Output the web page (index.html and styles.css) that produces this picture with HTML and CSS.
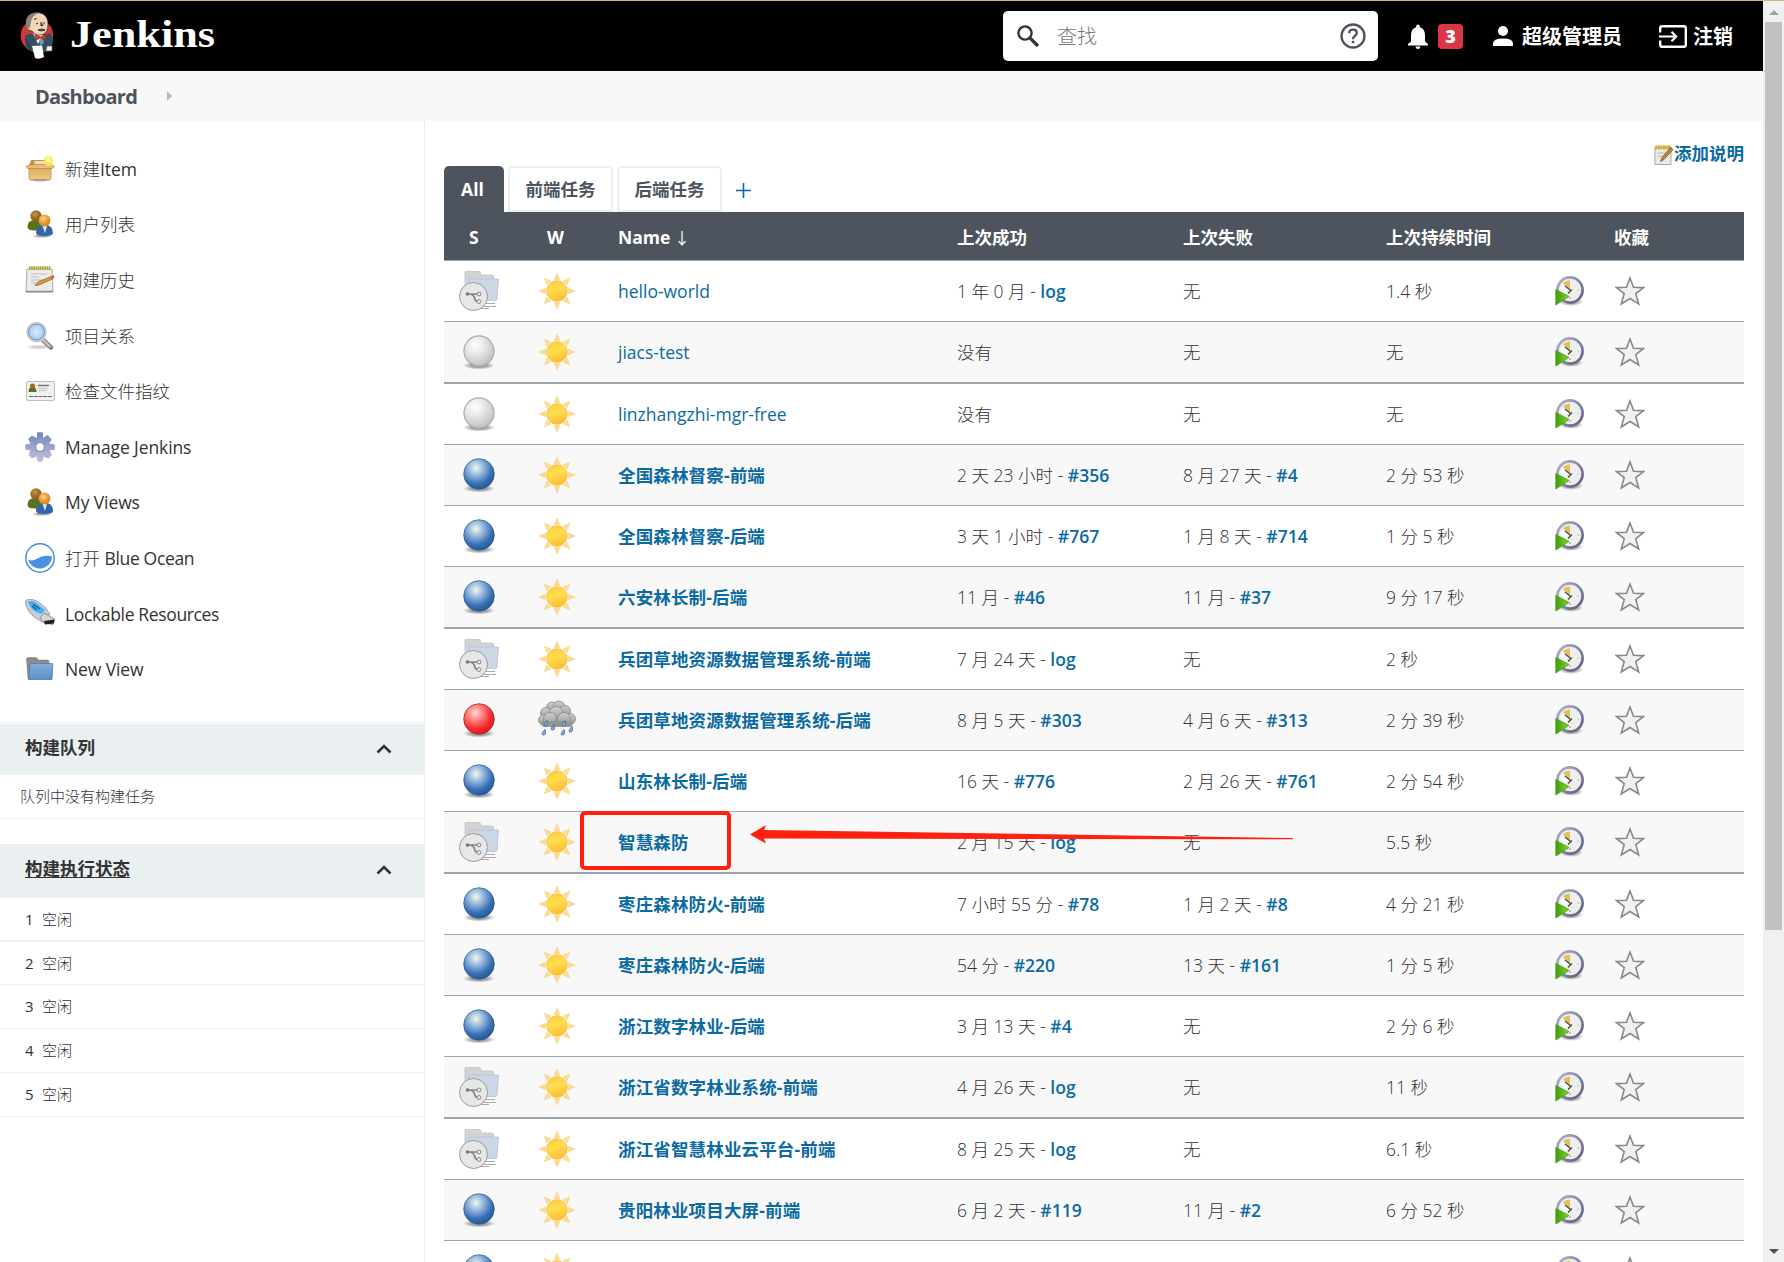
FILE: index.html
```html
<!DOCTYPE html>
<html lang="zh-CN">
<head>
<meta charset="utf-8">
<title>Dashboard [Jenkins]</title>
<link rel="stylesheet" href="styles.css">
</head>
<body>
<svg class="defs" width="0" height="0" aria-hidden="true">
  <defs>
    <radialGradient id="gBlue" cx=".4" cy=".3" r=".7"><stop offset="0" stop-color="#f4f8e4"/><stop offset=".3" stop-color="#a3c1e2"/><stop offset=".75" stop-color="#366fb4"/><stop offset="1" stop-color="#28599a"/></radialGradient>
    <radialGradient id="gRed" cx=".38" cy=".3" r=".7"><stop offset="0" stop-color="#ffd6d2"/><stop offset=".4" stop-color="#ff7a75"/><stop offset=".75" stop-color="#f62a2c"/><stop offset="1" stop-color="#df1d1f"/></radialGradient>
    <radialGradient id="gGrey" cx=".38" cy=".3" r=".75"><stop offset="0" stop-color="#fff"/><stop offset=".4" stop-color="#e8e8e8"/><stop offset="1" stop-color="#bcbcbc"/></radialGradient>
    <radialGradient id="gShade"><stop offset=".5" stop-color="#000" stop-opacity=".35"/><stop offset="1" stop-color="#000" stop-opacity="0"/></radialGradient>
    <linearGradient id="gSun" x1="0" y1="0" x2=".3" y2="1"><stop offset="0" stop-color="#fbc83f"/><stop offset=".5" stop-color="#ffdf4e"/><stop offset="1" stop-color="#fcbf37"/></linearGradient>
    <linearGradient id="gCloud" x1="0" y1="0" x2="0" y2="1"><stop offset="0" stop-color="#cfd1ce"/><stop offset="1" stop-color="#949693"/></linearGradient>
    <linearGradient id="gBox" x1="0" y1="0" x2="0" y2="1"><stop offset="0" stop-color="#d9a557"/><stop offset="1" stop-color="#f0c988"/></linearGradient>
    <linearGradient id="gGear" x1="0" y1="0" x2="0" y2="1"><stop offset="0" stop-color="#7288b4"/><stop offset="1" stop-color="#c6bfdd"/></linearGradient>
    <linearGradient id="gFold" x1="0" y1="0" x2="0" y2="1"><stop offset="0" stop-color="#85add9"/><stop offset="1" stop-color="#5c8fc9"/></linearGradient>
    <linearGradient id="gRing" x1="0" y1="0" x2="1" y2="1"><stop offset="0" stop-color="#b3b3ce"/><stop offset="1" stop-color="#5c5780"/></linearGradient>
    <radialGradient id="gLens"><stop offset="0" stop-color="#dcecfb"/><stop offset="1" stop-color="#9fc4ec"/></radialGradient>
    <linearGradient id="gPlay" x1="0" y1="0" x2="1" y2="0"><stop offset="0" stop-color="#3f9a10"/><stop offset="1" stop-color="#7edb25"/></linearGradient>
    <radialGradient id="gOr" cx=".4" cy=".35"><stop offset="0" stop-color="#fbd08a"/><stop offset="1" stop-color="#e38d1c"/></radialGradient>
    <radialGradient id="gBr" cx=".4" cy=".35"><stop offset="0" stop-color="#c4924c"/><stop offset="1" stop-color="#94601a"/></radialGradient>
  </defs>
  <symbol id="blue" viewBox="0 0 40 40"><ellipse cx="20" cy="33.5" rx="16" ry="4" fill="url(#gShade)"/><circle cx="20" cy="19" r="15.3" fill="url(#gBlue)" stroke="#2c5690" stroke-width=".7"/></symbol>
  <symbol id="red" viewBox="0 0 40 40"><ellipse cx="20" cy="33.5" rx="16" ry="4" fill="url(#gShade)"/><circle cx="20" cy="19" r="15.3" fill="url(#gRed)" stroke="#992020" stroke-width=".7"/></symbol>
  <symbol id="grey" viewBox="0 0 40 40"><ellipse cx="20" cy="33.5" rx="16" ry="4" fill="url(#gShade)"/><circle cx="20" cy="19" r="15.1" fill="url(#gGrey)" stroke="#a9a9a9" stroke-width="1.1"/></symbol>
  <symbol id="branch" viewBox="0 0 40 40"><path d="M6 1Q6 0 7 0H20Q21 0 21.5 2L22 4H33Q34.5 4 34.5 6V26H6z" fill="#d3d3d3" stroke="#bdbdbd" stroke-width=".7"/><path d="M10 9Q10 8 11 8H39.5L38 28Q38 29.500 36 29.500H12z" fill="#ccd7e6" stroke="#b0c1d8" stroke-width=".8"/><path d="M26 32.500H36M24 35.500H37M22 37.500H30" stroke="#aaa" stroke-width="1.100"/><circle cx="14.500" cy="25.500" r="14" fill="#e7e7e7" stroke="#9a9a9a"/><path d="M8 23H19M11 23Q15 24 15.500 27Q16 30 18.500 30.500" fill="none" stroke="#858585" stroke-width="1.700"/><circle cx="8.500" cy="23" r="1.800" fill="#777"/><circle cx="20" cy="23" r="1.900" fill="#eee" stroke="#888"/><circle cx="20" cy="30.500" r="1.900" fill="#eee" stroke="#888"/></symbol>
  <symbol id="sun" viewBox="-20 -20 40 40"><g fill="#fbdc91" stroke="#f6cd79" stroke-width=".5"><path id="ray" d="M-2.800-11.500L0-18L2.800-11.500z"/><use href="#ray" transform="rotate(45)"/><use href="#ray" transform="rotate(90)"/><use href="#ray" transform="rotate(135)"/><use href="#ray" transform="rotate(180)"/><use href="#ray" transform="rotate(225)"/><use href="#ray" transform="rotate(270)"/><use href="#ray" transform="rotate(315)"/></g><circle r="10.300" fill="url(#gSun)" stroke="#f8c548"/></symbol>
  <symbol id="rain" viewBox="0 0 40 40"><g fill="url(#gCloud)" stroke="#868886" stroke-width=".8"><circle cx="15" cy="7.500" r="5.500"/><circle cx="22" cy="7" r="6"/><circle cx="28" cy="11" r="5.500"/><circle cx="9" cy="13" r="5.500"/><circle cx="33" cy="19" r="5.500"/><circle cx="6.500" cy="20" r="5"/><circle cx="19" cy="14" r="7.500"/><circle cx="27" cy="19" r="6.500"/><circle cx="13" cy="19" r="6.500"/></g><path d="M5 21H35Q37 27 32 27H7Q3 26 5 21z" fill="#949693"/><g fill="#8fb1dd" stroke="#3969a8" stroke-width=".9"><path id="drop" d="M10 20.500Q5.500 25.500 8 26Q11.500 26.500 10 20.500z"/><use href="#drop" x="7" y="4"/><use href="#drop" x="18" y="0"/><use href="#drop" x="-2" y="9"/><use href="#drop" x="25" y="6"/><use href="#drop" x="17" y="9"/></g></symbol>
  <symbol id="build" viewBox="0 0 30 30"><ellipse cx="16" cy="25.500" rx="12" ry="4.500" fill="url(#gShade)"/><circle cx="15" cy="14" r="12.600" fill="#eeeeec" stroke="url(#gRing)" stroke-width="2.700"/><path d="M15 14V4.500A10 10 0 0 0 8 7z" fill="#e2c05a"/><path d="M10 10L15.500 14.500M13 17.500L17 13.500" stroke="#444" stroke-width="1.200"/><path d="M5.500 12L7.500 9L13 13.500L10.500 17z" fill="#fff"/><circle cx="23.500" cy="14" r=".8" fill="#bbb"/><circle cx="15" cy="22" r=".8" fill="#888"/><path d="M.8 13.500V29L14 20.500z" fill="url(#gPlay)" stroke="#4d9e22" stroke-width=".8"/></symbol>
  <symbol id="star" viewBox="0 0 30 30"><path d="M15 2L18.500 11.200L28.500 11.600L20.800 17.600L23.700 28L15 22.500L6.300 28L9.200 17.600L1.500 11.600L11.500 11.200z" fill="#f1f1f0" stroke="#888a85" stroke-width="1.600"/></symbol>
  <symbol id="people" viewBox="0 0 30 30"><ellipse cx="17" cy="27" rx="10" ry="2" fill="url(#gShade)"/><path d="M2.500 18Q2.500 11 10 11Q17 11 16 21Q3 23 2.500 18z" fill="#587318"/><circle cx="11" cy="7" r="5.700" fill="url(#gBr)"/><path d="M11 24Q11 15.500 19.500 15.500Q28 16 28 24Q28 27 19.500 27Q11 27 11 24z" fill="#3465a8"/><path d="M17.500 17H22L20 24z" fill="#dfe9f5"/><circle cx="19.500" cy="11.500" r="5.900" fill="url(#gOr)"/></symbol>
  <symbol id="pencil" viewBox="0 0 30 30"><path d="M2 4H27L28 27H1z" fill="#ececea" stroke="#a9a9a7"/><path d="M1 26.500H28" stroke="#8e8e8c" stroke-width="1.500"/><path d="M4 3H26" stroke="#a9a437" stroke-width="3.500" stroke-dasharray="1.600 .6"/><path d="M6 9H22M6 12H14M6 15H19M6 18H12" stroke="#bdbdbb" stroke-width="1"/><path d="M10 20.500L13 17L26 11.500L27.500 14L14 20z" fill="#d99b3d" stroke="#8d5d17" stroke-width=".7"/><path d="M26 11L29 10.500L29.300 12.800L27.500 14z" fill="#e25555"/></symbol>
  <symbol id="up" viewBox="0 0 16 10"><path d="M1.500 8.500L8 2L14.500 8.500" fill="none" stroke="#333" stroke-width="2.600"/></symbol>
</svg>

<div class="window">
<div class="page">
<header class="top">
  <a class="brand">
    <svg width="34" height="48" viewBox="0 0 34 48"><circle cx="17" cy="23.500" r="16.300" fill="#d33833"/><path d="M5 24Q9 21 13 22L24 23L30 21L33 26L32 38L25 40H12L6 36z" fill="#335061"/><path d="M13 21L18 32L23 23z" fill="#f5f5f5"/><path d="M6 14Q5 4 12 1.500Q18-.5 23 2Q28 5 28 12Q28 20 23 22.500Q16 24.500 12 19L8 18z" fill="#f0d6b7" stroke="#333" stroke-width=".7"/><path d="M6 15Q5 5 11 2Q15 0 19 1Q12 3 11 10L10 15L8 18Q6 17 6 15z" fill="#8a8279"/><path d="M14 7.500L17 6.500M21 10V14L23.500 13M16 12L18 11M23 11H25M18 18Q21 20 25 18L22 17z" fill="#6d6b6d" stroke="#333" stroke-width="1"/><path d="M15 22.500L21 25L26 22.500V28L21 26L16 28z" fill="#d33833" stroke="#81201c" stroke-width=".6"/><path d="M19 29L22 26L24 30L21 34z" fill="#6d9ac0"/><path d="M5 27Q9 31 11 39" stroke="#1a2b36" fill="none"/><path d="M12 34L22 33.500L24 45Q19 48 15 46z" fill="#fff"/><path d="M27 34H32V39H26z" fill="#f4f4f4" stroke="#555" stroke-width=".6"/></svg>
    <svg class="wordmark" width="150" height="60" viewBox="0 0 150 60"><text x="0" y="40.500" textLength="145" lengthAdjust="spacingAndGlyphs">Jenkins</text></svg>
  </a>
  <div class="search">
    <svg width="24" height="24" viewBox="0 0 24 24"><circle cx="9" cy="9" r="6.600" fill="none" stroke="#333" stroke-width="2.400"/><path d="M14 14L22 22" stroke="#333" stroke-width="3.200"/></svg>
    <span>查找</span>
    <svg width="26" height="26" viewBox="0 0 26 26"><circle cx="13" cy="13" r="11.500" fill="none" stroke="#4d545d" stroke-width="2.300"/><path d="M9.200 10.300Q9.200 6.700 13 6.700Q16.800 6.700 16.800 10Q16.800 11.700 14.900 13Q13 14.300 13 16.200" fill="none" stroke="#4d545d" stroke-width="2.300"/><path d="M11.800 17.800H14.200V20.200H11.800z" fill="#4d545d"/></svg>
  </div>
  <a class="bell"><svg width="20" height="25" viewBox="0 0 20 25"><path d="M10 .5Q11.800.5 11.800 2.200V3.300Q17 5 17 11V17.500L20 20V21.500H0V20L3 17.500V11Q3 5 8.200 3.300V2.200Q8.200.5 10 .5zM7.500 22.500H12.500Q12 25 10 25Q8 25 7.500 22.500z" fill="#fff"/></svg><b class="badge">3</b></a>
  <a class="user"><svg width="20" height="20" viewBox="0 0 20 20"><circle cx="10" cy="5" r="5" fill="#fff"/><path d="M0 20V17.500Q0 12.500 10 12.500Q20 12.500 20 17.500V20z" fill="#fff"/></svg><span>超级管理员</span></a>
  <a class="logout"><svg width="28" height="23" viewBox="0 0 28 23"><path d="M1.200 7.500V3.200Q1.200 1.200 3.200 1.200H24.800Q26.800 1.200 26.800 3.200V19.800Q26.800 21.800 24.800 21.800H3.200Q1.200 21.800 1.200 19.800V15.500" fill="none" stroke="#fff" stroke-width="2.400"/><path d="M0 11.500H17M12.500 6.800L17.200 11.500L12.500 16.200" fill="none" stroke="#fff" stroke-width="2.200"/></svg><span>注销</span></a>
</header>
<nav class="crumbs"><a>Dashboard</a><i></i></nav>

<div class="body">
<aside class="side">
  <ul class="tasks">
    <li><svg width="30" height="30" viewBox="0 0 30 30"><ellipse cx="15" cy="26" rx="12" ry="2" fill="url(#gShade)"/><path d="M6 6L24 6L27 12H4z" fill="#c4924a"/><path d="M9 7H21L20 11H10z" fill="#e6dcc8"/><path d="M4 11H26V24Q26 25.500 24.500 25.500H5.500Q4 25.500 4 24z" fill="url(#gBox)" stroke="#c38a3c" stroke-width=".7"/><path d="M4 11L.8 12.500L3 14.500H27L29.500 12.500L26 10.500z" fill="#e9be7d" stroke="#c38a3c" stroke-width=".7"/><circle cx="23.500" cy="7" r="4.800" fill="#fdf04b" opacity=".9"/><circle cx="23.500" cy="6.500" r="2" fill="#fffbb0"/></svg><span>新建<b class="lat">Item</b></span></li>
    <li><svg width="30" height="30"><use href="#people"/></svg><span>用户列表</span></li>
    <li><svg width="30" height="30"><use href="#pencil"/></svg><span>构建历史</span></li>
    <li><svg width="30" height="30" viewBox="0 0 30 30"><ellipse cx="14" cy="26" rx="13" ry="2.500" fill="url(#gShade)" opacity=".5"/><path d="M17 18L26 26.500" stroke="#858585" stroke-width="4.500" stroke-linecap="round"/><path d="M17 18L25 25.500" stroke="#c9c9c9" stroke-width="2" stroke-linecap="round"/><circle cx="11.500" cy="11" r="9.200" fill="url(#gLens)" stroke="#c5c9cc" stroke-width="2.200"/><circle cx="11.500" cy="11" r="7.800" fill="none" stroke="#6f9bd0" stroke-width="1"/></svg><span>项目关系</span></li>
    <li><svg width="30" height="30" viewBox="0 0 30 30"><rect x="1.500" y="5.500" width="28" height="19" rx="1.500" fill="#f0f0ee" stroke="#bdbdbb"/><path d="M3.500 16Q3.500 11 7.500 11Q11.500 11 11.500 16z" fill="#587318"/><circle cx="7.500" cy="10" r="2.600" fill="#a56a25"/><path d="M13 9.500H24" stroke="#777" stroke-width="1.500"/><path d="M14 12.500H23M14 14.500H22" stroke="#c5c5c3"/><path d="M4 20.500H27" stroke="#666" stroke-width="1.200" stroke-dasharray="4 .7"/></svg><span>检查文件指纹</span></li>
    <li><svg width="30" height="30" viewBox="-15 -15 30 30"><g fill="url(#gGear)"><path d="M-2.800-14.800H2.800L3.200-9L7.500-12L11.800-7.500L9-3.500L14.800-2.500V2.800L9.500 3.500L12 8L8.200 11.800L3.500 9.500L2.500 14.800H-2.500L-3.500 9.500L-8 11.500L-11.500 8L-9.500 3.500L-14.800 2.500V-2.500L-9.500-3.500L-12-8L-8-11.500L-3.200-9z"/></g><circle r="4.400" fill="#fff" stroke="#7a80a8"/></svg><b class="lat">Manage Jenkins</b></li>
    <li><svg width="30" height="30"><use href="#people"/></svg><b class="lat">My Views</b></li>
    <li><svg width="30" height="30" viewBox="0 0 30 30"><circle cx="15" cy="15" r="14.200" fill="#fff" stroke="#4a90e2" stroke-width="1.500"/><path d="M3 16.500Q7 18.500 11.500 16Q19 11 27 13.500A12.200 12.200 0 0 1 3 16.500z" fill="#4a90e2"/></svg><span>打开 <b class="lat tight">Blue Ocean</b></span></li>
    <li><svg width="30" height="30" viewBox="0 0 30 30"><path d="M.5 2Q2 0 6 0Q12 1 20 8L25 15L18 23Q6 18 2 9Q0 5 .5 2z" fill="#c9cbd9" stroke="#8e90a5" stroke-width=".8"/><path d="M3 3Q6 1 10 3L20 11L16 15Q6 12 3 3z" fill="#3fb4ee"/><path d="M8 5L15 10M7 7L12 11" stroke="#1b5f94" stroke-width="1.400"/><path d="M19 14L29.500 20L28 25.500L19 24L15 19z" fill="#d4d4d4" stroke="#777" stroke-width=".7"/><path d="M19 22L29.500 20.500L29 24.500L20 25.500z" fill="#222"/></svg><b class="lat tight">Lockable Resources</b></li>
    <li><svg width="30" height="30" viewBox="0 0 30 30"><path d="M1.500 5Q1.500 3.500 3 3.500H11Q12.500 3.500 13 6H23Q24 6 24 8V25H3z" fill="#8b8b89" stroke="#777" stroke-width=".5"/><path d="M5 10.500Q5 9.500 6 9.500H27Q28 9.500 27.800 10.500L27 25.500H3.500z" fill="url(#gFold)" stroke="#4c7cb5" stroke-width=".8"/></svg><b class="lat">New View</b></li>
  </ul>
  <section class="pane queue">
    <h2><span>构建队列</span><svg width="16" height="10"><use href="#up"/></svg></h2>
    <p>队列中没有构建任务</p>
  </section>
  <section class="pane execs">
    <h2><span>构建执行状态</span><svg width="16" height="10"><use href="#up"/></svg></h2>
    <ol><li><b>1</b>空闲</li><li><b>2</b>空闲</li><li><b>3</b>空闲</li><li><b>4</b>空闲</li><li><b>5</b>空闲</li></ol>
  </section>
</aside>

<main class="main">
  <div class="describe"><svg width="20" height="20" viewBox="0 0 20 20"><path d="M1 2H17V19.500H.8z" fill="#e9e9e7" stroke="#aaa9a5"/><path d="M1.500 2.500H17" stroke="#d2ae28" stroke-width="4" stroke-dasharray="2 .5"/><path d="M3.500 8H12M3.500 11H9" stroke="#bbb"/><path d="M6.500 16.500L8 12.500L16.500 2.500L19 4.500L10 14.500z" fill="#bb8a35" stroke="#69490f" stroke-width=".7"/></svg><a>添加说明</a></div>
  <div class="tabs"><a class="on">All</a><a>前端任务</a><a>后端任务</a><svg width="15" height="15" viewBox="0 0 15 15"><path d="M7.500 0V15M0 7.500H15" stroke="#0b6aa2" stroke-width="1.600"/></svg></div>
  <div class="jobs">
    <div class="head"><b>S</b><b>W</b><b>Name <em>↓</em></b><b>上次成功</b><b>上次失败</b><b>上次持续时间</b><b></b><b>收藏</b></div>
    <div class="row"><svg><use href="#branch"/></svg><svg><use href="#sun"/></svg><a class="lat">hello-world</a><span>1 年 0 月 - <a>log</a></span><span>无</span><span>1.4 秒</span><svg><use href="#build"/></svg><svg><use href="#star"/></svg></div>
    <div class="row"><svg><use href="#grey"/></svg><svg><use href="#sun"/></svg><a class="lat">jiacs-test</a><span>没有</span><span>无</span><span>无</span><svg><use href="#build"/></svg><svg><use href="#star"/></svg></div>
    <div class="row"><svg><use href="#grey"/></svg><svg><use href="#sun"/></svg><a class="lat">linzhangzhi-mgr-free</a><span>没有</span><span>无</span><span>无</span><svg><use href="#build"/></svg><svg><use href="#star"/></svg></div>
    <div class="row"><svg><use href="#blue"/></svg><svg><use href="#sun"/></svg><a class="cn">全国森林督察-前端</a><span>2 天 23 小时 - <a>#356</a></span><span>8 月 27 天 - <a>#4</a></span><span>2 分 53 秒</span><svg><use href="#build"/></svg><svg><use href="#star"/></svg></div>
    <div class="row"><svg><use href="#blue"/></svg><svg><use href="#sun"/></svg><a class="cn">全国森林督察-后端</a><span>3 天 1 小时 - <a>#767</a></span><span>1 月 8 天 - <a>#714</a></span><span>1 分 5 秒</span><svg><use href="#build"/></svg><svg><use href="#star"/></svg></div>
    <div class="row"><svg><use href="#blue"/></svg><svg><use href="#sun"/></svg><a class="cn">六安林长制-后端</a><span>11 月 - <a>#46</a></span><span>11 月 - <a>#37</a></span><span>9 分 17 秒</span><svg><use href="#build"/></svg><svg><use href="#star"/></svg></div>
    <div class="row"><svg><use href="#branch"/></svg><svg><use href="#sun"/></svg><a class="cn">兵团草地资源数据管理系统-前端</a><span>7 月 24 天 - <a>log</a></span><span>无</span><span>2 秒</span><svg><use href="#build"/></svg><svg><use href="#star"/></svg></div>
    <div class="row"><svg><use href="#red"/></svg><svg><use href="#rain"/></svg><a class="cn">兵团草地资源数据管理系统-后端</a><span>8 月 5 天 - <a>#303</a></span><span>4 月 6 天 - <a>#313</a></span><span>2 分 39 秒</span><svg><use href="#build"/></svg><svg><use href="#star"/></svg></div>
    <div class="row"><svg><use href="#blue"/></svg><svg><use href="#sun"/></svg><a class="cn">山东林长制-后端</a><span>16 天 - <a>#776</a></span><span>2 月 26 天 - <a>#761</a></span><span>2 分 54 秒</span><svg><use href="#build"/></svg><svg><use href="#star"/></svg></div>
    <div class="row"><svg><use href="#branch"/></svg><svg><use href="#sun"/></svg><a class="cn">智慧森防</a><span>2 月 15 天 - <a>log</a></span><span>无</span><span>5.5 秒</span><svg><use href="#build"/></svg><svg><use href="#star"/></svg>
      <i class="mark"></i>
      <svg class="arrow" width="544" height="20" viewBox="0 0 544 20"><path d="M0 9.500L16 0L14 5L543 13V14.300L14 13.500L16 18.500z" fill="#ff2010"/></svg></div>
    <div class="row"><svg><use href="#blue"/></svg><svg><use href="#sun"/></svg><a class="cn">枣庄森林防火-前端</a><span>7 小时 55 分 - <a>#78</a></span><span>1 月 2 天 - <a>#8</a></span><span>4 分 21 秒</span><svg><use href="#build"/></svg><svg><use href="#star"/></svg></div>
    <div class="row"><svg><use href="#blue"/></svg><svg><use href="#sun"/></svg><a class="cn">枣庄森林防火-后端</a><span>54 分 - <a>#220</a></span><span>13 天 - <a>#161</a></span><span>1 分 5 秒</span><svg><use href="#build"/></svg><svg><use href="#star"/></svg></div>
    <div class="row"><svg><use href="#blue"/></svg><svg><use href="#sun"/></svg><a class="cn">浙江数字林业-后端</a><span>3 月 13 天 - <a>#4</a></span><span>无</span><span>2 分 6 秒</span><svg><use href="#build"/></svg><svg><use href="#star"/></svg></div>
    <div class="row"><svg><use href="#branch"/></svg><svg><use href="#sun"/></svg><a class="cn">浙江省数字林业系统-前端</a><span>4 月 26 天 - <a>log</a></span><span>无</span><span>11 秒</span><svg><use href="#build"/></svg><svg><use href="#star"/></svg></div>
    <div class="row"><svg><use href="#branch"/></svg><svg><use href="#sun"/></svg><a class="cn">浙江省智慧林业云平台-前端</a><span>8 月 25 天 - <a>log</a></span><span>无</span><span>6.1 秒</span><svg><use href="#build"/></svg><svg><use href="#star"/></svg></div>
    <div class="row"><svg><use href="#blue"/></svg><svg><use href="#sun"/></svg><a class="cn">贵阳林业项目大屏-前端</a><span>6 月 2 天 - <a>#119</a></span><span>11 月 - <a>#2</a></span><span>6 分 52 秒</span><svg><use href="#build"/></svg><svg><use href="#star"/></svg></div>
    <div class="row"><svg><use href="#blue"/></svg><svg><use href="#sun"/></svg><a></a><span></span><span></span><span></span><svg><use href="#build"/></svg><svg><use href="#star"/></svg></div>
  </div>
</main>
</div>
</div>
<div class="scroll"><i class="su"></i><i class="thumb"></i><i class="sd"></i></div>
</div>
</body>
</html>
```
FILE: styles.css
```css
* { box-sizing: border-box; }
body {
  margin: 0;
  overflow: hidden;
  font: 17.5px/24px "Open Sans", "Noto Sans CJK SC", sans-serif;
  color: #333;
  background: #fff;
}
h2, p, ul, ol { margin: 0; padding: 0; list-style: none; }
svg { display: block; flex: none; }
.defs { position: absolute; }
.window { display: flex; height: 1262px; overflow: hidden; border-top: 1px solid #d2b48c; }
.page { flex: 1; min-width: 0; }

.top { display: flex; align-items: center; height: 70px; padding: 0 30px 0 20px; background: #000; color: #fff; font-size: 20px; font-weight: 700; }
.top span { padding-top: 2px; }
.brand { display: flex; align-items: center; gap: 16px; margin-right: auto; }
.wordmark text { font: 700 37px "Liberation Serif", serif; fill: #fff; }
.search { display: flex; align-items: center; width: 375px; height: 50px; padding: 0 12px 0 13px; border-radius: 5px; background: #fff; color: #777; font-weight: 400; }
.search span { flex: 1; margin-left: 17px; font-weight: 300; }
.bell { display: flex; align-items: center; gap: 10px; margin-left: 30px; }
.badge { width: 25px; height: 25px; border-radius: 4px; background: #dc3545; font-size: 18px; line-height: 25px; text-align: center; }
.user { display: flex; align-items: center; gap: 9px; margin-left: 30px; }
.logout { display: flex; align-items: center; gap: 6px; margin-left: 37px; }

.crumbs { display: flex; align-items: center; height: 50px; padding-left: 35px; background: #f8f8f8; color: #4d545d; font-size: 20px; font-weight: 700; }
.crumbs a { width: 132px; letter-spacing: -.75px; padding-top: 2px; }
.crumbs i { border: 5px solid transparent; border-left-color: #b5b5b5; border-right: 0; margin-top: -1px; }

.body { display: flex; height: 1141px; }
.side { width: 425px; border-right: 1px solid #eaeff2; }
.tasks { padding: 20px 0 25px; }
.tasks li { display: flex; align-items: center; gap: 10px; height: 55.600px; padding-left: 25px; }
.tasks span { font-weight: 300; }
.tasks .lat { font-weight: 500; letter-spacing: -.1px; }
.tasks .tight { letter-spacing: -.35px; }
.pane h2 { display: flex; align-items: center; justify-content: space-between; padding: 0 32px 4px 25px; background: #eaeff2; font-size: 17.500px; font-weight: 700; }
.pane h2 svg { margin-top: 3px; }
.pane { font-size: 15px; }
.queue { border-top: 1px solid #eaeff2; }
.queue h2 { height: 51px; margin-top: 1px; }
.queue p { height: 44px; padding-left: 20px; line-height: 43px; border-bottom: 1px solid #eaeff2; font-weight: 300; }
.execs { margin-top: 25px; }
.execs h2 { height: 54px; padding-bottom: 5px; }
.execs h2 span { text-decoration: underline; text-decoration-thickness: 1px; text-underline-offset: 2px; }
.execs li { display: flex; height: 44px; padding-left: 25px; line-height: 43px; border-bottom: 1px solid #eaeff2; font-weight: 300; }
.execs li:first-child { border-bottom-width: 2px; }
.execs li:nth-child(2) { height: 43px; }
.execs b { width: 17px; font-weight: 400; }

.main { flex: 1; padding: 20px 19px 0; }
.describe { display: flex; justify-content: flex-end; align-items: center; height: 25px; padding-bottom: 1px; color: #0b6aa2; font-weight: 700; }
.describe svg { margin-top: 3px; }
.tabs { display: flex; gap: 4px; height: 46px; color: #4d545d; font-weight: 700; }
.tabs a { width: 105px; border: 2px solid #eaeff2; border-radius: 5px 5px 0 0; text-align: center; line-height: 42px; }
.tabs .on { width: 60px; border: 0; background: #4d545d; color: #fff; line-height: 46px; padding-right: 3px; }
.tabs svg { margin: 17px 0 0 10px; }
.head, .row { position: relative; display: grid; grid-template-columns: 75px 99px 339px 226px 203px 168px 60px 1fr; align-items: center; }
.head { height: 49px; padding-top: 2px; background: #4d545d; color: #fff; border-bottom: 1px solid #9aa7b0; }
.head b:nth-child(-n+2) { padding-left: 25px; }
.head b:nth-child(2) { padding-left: 28px; }
.head em { font: 400 16px/20px "Noto Sans CJK SC", sans-serif; margin-left: -1px; }
.row { height: 61px; border-bottom: 1px solid #9aa7b0; }
.row:nth-child(odd) { background: #f8f8f8; }
.row:nth-child(4n+3) { height: 62px; border-bottom-width: 2px; }
.row > svg { width: 40px; height: 40px; margin-left: 15px; }
.row > svg:nth-child(2) { margin-left: 18px; }
.row > svg:nth-child(7), .row > svg:nth-child(8) { width: 30px; height: 30px; margin-left: 1px; }
.row a { color: #0b6aa2; }
.row .lat { font-weight: 500; }
.row .cn { font-weight: 700; letter-spacing: .15px; }
.row span { font-weight: 300; letter-spacing: 0; }
.row span a { font-weight: 600; }
.row .mark { position: absolute; left: 136px; top: -1px; width: 151px; height: 59px; border: 4px solid #ff2010; border-radius: 5px; }
.row > .arrow { position: absolute; left: 306px; top: 13px; width: 544px; height: 20px; margin: 0; }

.scroll { display: flex; flex-direction: column; align-items: center; width: 21px; background: #f0f0f0; }
.thumb { width: 17px; height: 908px; background: #c1c1c1; }
.su { margin: 9px 0 7px; border: 5px solid transparent; border-top: 0; border-bottom-color: #a3a3a3; }
.sd { margin: auto 0 8px; border: 5px solid transparent; border-bottom: 0; border-top-color: #505050; }
```
